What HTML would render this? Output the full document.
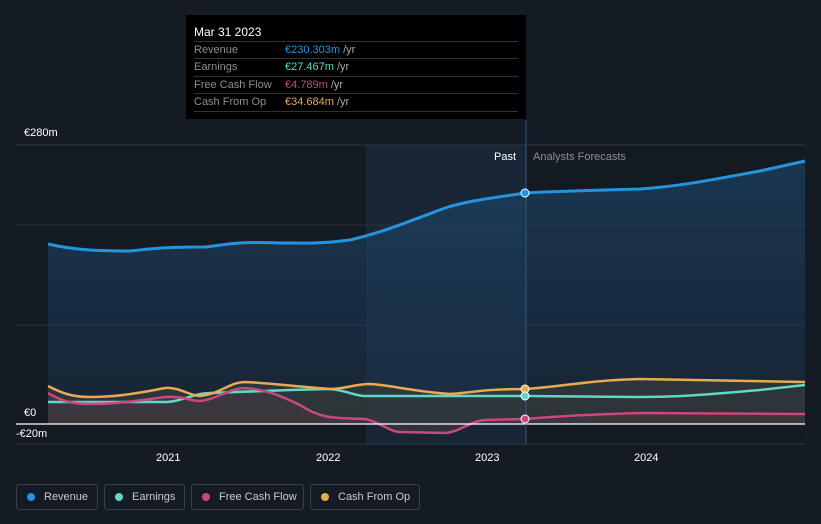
<!DOCTYPE html><html><head><style>
html,body{margin:0;background:#151b24;width:821px;height:524px;overflow:hidden;font-family:"Liberation Sans",sans-serif;}
.tip{position:absolute;left:186px;top:15px;width:340px;height:104px;background:#000;color:#fff;font-size:11px;}
.tip .h{position:absolute;left:8px;top:10px;font-size:12px}
.row{position:absolute;left:8px;width:324px;height:17px;border-top:1px solid #333;line-height:17px;color:#8a8f96}
.row span{position:absolute;left:91px}
.leg{position:absolute;top:484px;height:26px;border:1px solid #3a414b;border-radius:3px;color:#c8ccd2;font-size:11px;line-height:24px;padding-left:27px;box-sizing:border-box;white-space:nowrap}
.leg i{position:absolute;left:10px;top:8px;width:8px;height:8px;border-radius:50%}
</style></head><body>
<svg width="821" height="524" style="position:absolute;left:0;top:0">
<defs><linearGradient id="g" x1="0" y1="0" x2="0" y2="1"><stop offset="0" stop-color="#1d4a70" stop-opacity=".6"/><stop offset="1" stop-color="#1d3550" stop-opacity=".4"/></linearGradient></defs>
<rect x="16" y="145" width="789" height="300" fill="#141a22"/>
<rect x="366" y="145" width="160" height="300" fill="#182636"/>
<line x1="16" y1="145" x2="805" y2="145" stroke="#2e3540"/>
<line x1="16" y1="225" x2="805" y2="225" stroke="#2a313b"/>
<line x1="16" y1="325" x2="805" y2="325" stroke="#2a313b"/>
<line x1="16" y1="444" x2="805" y2="444" stroke="#2e3540"/>
<path d="M48,244 C70,249 90,251 130,251 C150,249 160,247 205,247 C225,245 235,241 280,243 C300,243 320,244 350,240 C380,233 400,225 445,208 C470,200 500,197 525,193 C560,191 600,190 640,189 C680,186 700,182 760,171 L805,161 L805,424 L48,424Z" fill="url(#g)"/>
<path d="M48,386 C60,392 70,397 90,397 C110,397 130,395 165,388 C180,387 190,396 200,396 C220,394 230,382 245,382 C270,383 290,386 330,389 C345,389 355,384 370,384 C390,385 410,391 450,394 C470,393 480,389 525,389 C560,387 590,380 640,379 C700,380 760,381 805,382 L805,424 L48,424Z" fill="#3b3f3a" opacity=".6"/>
<path d="M48,393 C60,400 70,404 90,404 C110,404 130,402 165,397 C185,396 190,401 200,401 C215,400 230,388 245,388 C270,390 285,398 300,405 C320,418 330,418 365,419 C380,422 390,432 400,432 L445,433 C460,432 470,421 485,420 L525,419 C560,416 600,414 640,413 L805,414 L805,424 L48,424Z" fill="#4a3a45" opacity=".5"/>
<path d="M48,244 C70,249 90,251 130,251 C150,249 160,247 205,247 C225,245 235,241 280,243 C300,243 320,244 350,240 C380,233 400,225 445,208 C470,200 500,197 525,193 C560,191 600,190 640,189 C680,186 700,182 760,171 L805,161" fill="none" stroke="#2394df" stroke-width="3"/>
<path d="M48,402 L165,402 C180,402 195,393 210,393 L290,390 L330,389 C345,390 355,396 365,396 L525,396 L640,397 C680,397 700,395 760,390 L805,385" fill="none" stroke="#5fd9c6" stroke-width="2.5"/>
<path d="M48,393 C60,400 70,404 90,404 C110,404 130,402 165,397 C185,396 190,401 200,401 C215,400 230,388 245,388 C270,390 285,398 300,405 C320,418 330,418 365,419 C380,422 390,432 400,432 L445,433 C460,432 470,421 485,420 L525,419 C560,416 600,414 640,413 L805,414" fill="none" stroke="#c8487f" stroke-width="2.5"/>
<path d="M48,386 C60,392 70,397 90,397 C110,397 130,395 165,388 C180,387 190,396 200,396 C220,394 230,382 245,382 C270,383 290,386 330,389 C345,389 355,384 370,384 C390,385 410,391 450,394 C470,393 480,389 525,389 C560,387 590,380 640,379 C700,380 760,381 805,382" fill="none" stroke="#e9a955" stroke-width="2.5"/>
<line x1="16" y1="424" x2="805" y2="424" stroke="#fff" stroke-width="1.3"/>
<line x1="526" y1="120" x2="526" y2="444" stroke="#2a5a80"/>
<circle cx="525" cy="193" r="4" fill="#2394df" stroke="#fff"/>
<circle cx="525" cy="389" r="4" fill="#e9a955" stroke="#fff"/>
<circle cx="525" cy="396" r="4" fill="#5fd9c6" stroke="#fff"/>
<circle cx="525" cy="419" r="4" fill="#c8487f" stroke="#fff"/>
<g font-size="11" fill="#fff" font-family="Liberation Sans">
<text x="24" y="136">€280m</text><text x="24" y="416">€0</text><text x="16" y="437">-€20m</text>
<text x="156" y="461">2021</text><text x="316" y="461">2022</text><text x="475" y="461">2023</text><text x="634" y="461">2024</text>
<text x="494" y="160">Past</text><text x="533" y="160" fill="#8a8f96">Analysts Forecasts</text></g>
</svg>
<div class="tip"><div class="h">Mar 31 2023</div>
<div class="row" style="top:26px">Revenue<span style="color:#2394df">€230.303m <b style="font-weight:normal;color:#aaa">/yr</b></span></div>
<div class="row" style="top:43px">Earnings<span style="color:#5fd9c6">€27.467m <b style="font-weight:normal;color:#aaa">/yr</b></span></div>
<div class="row" style="top:61px">Free Cash Flow<span style="color:#c8487f">€4.789m <b style="font-weight:normal;color:#aaa">/yr</b></span></div>
<div class="row" style="top:78px;border-bottom:1px solid #333">Cash From Op<span style="color:#e9a955">€34.684m <b style="font-weight:normal;color:#aaa">/yr</b></span></div>
</div>
<div class="leg" style="left:16px;width:82px"><i style="background:#2394df"></i>Revenue</div>
<div class="leg" style="left:104px;width:81px"><i style="background:#5fd9c6"></i>Earnings</div>
<div class="leg" style="left:191px;width:113px"><i style="background:#c8487f"></i>Free Cash Flow</div>
<div class="leg" style="left:310px;width:110px"><i style="background:#e9a955"></i>Cash From Op</div>
</body></html>
